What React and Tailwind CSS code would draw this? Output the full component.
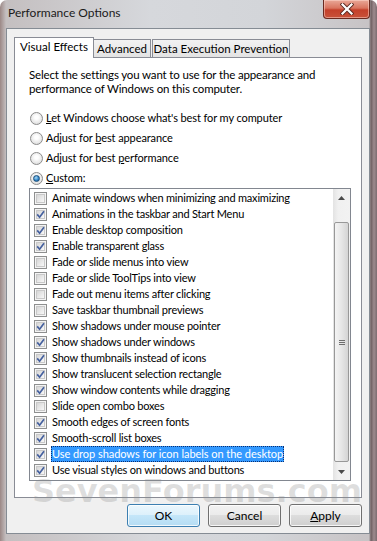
import React from "react";

const items = [
  ["Animate windows when minimizing and maximizing", false],
  ["Animations in the taskbar and Start Menu", true],
  ["Enable desktop composition", true],
  ["Enable transparent glass", true],
  ["Fade or slide menus into view", false],
  ["Fade or slide ToolTips into view", false],
  ["Fade out menu items after clicking", false],
  ["Save taskbar thumbnail previews", false],
  ["Show shadows under mouse pointer", true],
  ["Show shadows under windows", true],
  ["Show thumbnails instead of icons", true],
  ["Show translucent selection rectangle", true],
  ["Show window contents while dragging", true],
  ["Slide open combo boxes", false],
  ["Smooth edges of screen fonts", true],
  ["Smooth-scroll list boxes", true],
  ["Use drop shadows for icon labels on the desktop", true],
  ["Use visual styles on windows and buttons", true],
];

const CheckBox = ({ checked }) => (
  <span className="flex h-[13px] w-[13px] shrink-0 items-center justify-center border border-[#8e8f8f] bg-[#f4f4f4]">
    <span className="relative h-[9px] w-[9px] border border-[#c9c9c9] bg-[linear-gradient(135deg,#d6d6d6,#f8f8f8)]">
      {checked && (
        <svg viewBox="0 0 11 11" className="absolute -left-[2px] -top-[2px] h-[11px] w-[11px]">
          <path d="M2.2 5.4 L4.6 8.2 L9 2.2" fill="none" stroke="#45609e" strokeWidth="1.7" />
        </svg>
      )}
    </span>
  </span>
);

const Radio = ({ checked }) => (
  <span className="flex h-[13px] w-[13px] shrink-0 items-center justify-center rounded-full border border-[#8b8b8b] bg-[radial-gradient(circle_at_50%_40%,#ffffff_20%,#d2d2d2)]">
    {checked && (
      <span className="h-[7px] w-[7px] rounded-full border border-[#1d4f7a] bg-[radial-gradient(circle_at_40%_35%,#a8dcf8,#2b7fc4_60%,#164f82)]" />
    )}
  </span>
);

const Arrow = ({ up }) => (
  <div className="flex h-[17px] items-center justify-center">
    <svg viewBox="0 0 7 4" className="h-[4px] w-[7px]">
      <path d={up ? "M0 4 L3.5 0 L7 4 Z" : "M0 0 L3.5 4 L7 0 Z"} fill="#4b4b4b" />
    </svg>
  </div>
);

const Button = ({ children, main }) => (
  <button
    className={
      "flex h-[23px] w-[73px] items-center justify-center rounded-[3px] border text-[12px] text-black shadow-[inset_0_0_0_1px_rgba(255,255,255,0.8)] " +
      (main
        ? "border-[#3c7fb1] bg-[linear-gradient(#ecf7fd_0%,#dcf0fb_50%,#c4e6f9_50%,#b4dcf3_100%)]"
        : "border-[#707070] bg-[linear-gradient(#f2f2f2_0%,#ebebeb_50%,#dddddd_50%,#cfcfcf_100%)]")
    }
  >
    {children}
  </button>
);

export default function App() {
  return (
    <div className="relative flex h-[541px] w-[377px] flex-col overflow-hidden whitespace-nowrap rounded-t-[7px] bg-[linear-gradient(to_right,#9c8886_0px,#c4bfc0_6px,#d6d8dc_40%,#d3d5d9_70%,#c7c3c5_369px,#6f6062_371px,#9d8b8e_374px,#7c6c70_377px)] font-['Lato',sans-serif] text-[11.5px] text-black">
      {/* title bar */}
      <div className="flex h-[28px] items-start">
        <div className="pl-[8px] pt-[5px] text-[12px] leading-[16px] text-[#1b1b1b]">Performance Options</div>
        <div className="ml-auto mr-[7px] flex h-[19px] w-[47px] items-center justify-center rounded-b-[4px] border border-t-0 border-[#6a2a20] bg-[linear-gradient(#e9a898_0%,#d9745f_45%,#c4402a_55%,#c8523a_100%)] shadow-[inset_0_0_0_1px_rgba(255,220,210,0.5)]">
          <svg viewBox="0 0 14 12" className="h-[12px] w-[14px]">
            <path d="M2.5 1.5 L11.5 10.5 M11.5 1.5 L2.5 10.5" stroke="#5a2a22" strokeWidth="4" strokeLinecap="square" />
            <path d="M2.5 1.5 L11.5 10.5 M11.5 1.5 L2.5 10.5" stroke="#ffffff" strokeWidth="2.2" strokeLinecap="square" />
          </svg>
        </div>
      </div>

      {/* client area */}
      <div className="ml-[6px] flex h-[506px] w-[364px] flex-col border border-[#858c94] bg-[#f0f0f0]">
        <div className="relative z-10 -mb-[1px] ml-[7px] mt-[8px] flex h-[21px] items-end">
          <div className="flex h-[21px] w-[80px] items-start justify-center border border-b-0 border-[#898c95] bg-white pt-[1px] leading-[16px]">
            Visual Effects
          </div>
          <div className="mb-[1px] -ml-[1px] flex h-[18px] w-[58px] items-start justify-center border border-b-0 border-[#898c95] bg-[linear-gradient(#f2f2f2,#e3e3e3)] pt-[1px] leading-[16px]">
            Advanced
          </div>
          <div className="mb-[1px] ml-[1px] flex h-[18px] w-[138px] items-start justify-center border border-b-0 border-[#898c95] bg-[linear-gradient(#f2f2f2,#e3e3e3)] pt-[1px] leading-[16px]">
            Data Execution Prevention
          </div>
        </div>

        <div className="ml-[7px] flex h-[441px] w-[348px] flex-col border border-[#898c95] bg-white">
          <p className="pl-[14px] pt-[10px] leading-[14px] tracking-[-0.15px]">
            Select the settings you want to use for the appearance and
            <br />
            performance of Windows on this computer.
          </p>
          <div className="mt-[12px] flex flex-col pl-[15px] text-[11px] tracking-[-0.1px]">
            {[
              [<><u>L</u>et Windows choose what's best for my computer</>, false],
              [<>Adjust for <u>b</u>est appearance</>, false],
              [<>Adjust for best <u>p</u>erformance</>, false],
              [<><u>C</u>ustom:</>, true],
            ].map(([label, on], i) => (
              <div key={i} className="flex h-[20px] items-center gap-[3px]">
                <Radio checked={on} />
                <span className="leading-[16px]">{label}</span>
              </div>
            ))}
          </div>

          <div className="ml-[14px] flex h-[293px] w-[322px] border border-[#828790] bg-white">
            <div className="flex flex-1 flex-col pt-[1px] text-[11px] tracking-[-0.2px]">
              {items.map(([label, on], i) => (
                <div key={i} className="flex h-[16px] items-center pl-[4px]">
                  <CheckBox checked={on} />
                  {i === 16 ? (
                    <span className="ml-[4px] h-[16px] bg-[#3399ff] px-[1px] leading-[16px] tracking-[-0.05px] text-white outline-1 -outline-offset-1 outline-dotted outline-[#0b2f70]">
                      {label}
                    </span>
                  ) : (
                    <span className="ml-[5px] leading-[16px]">{label}</span>
                  )}
                </div>
              ))}
            </div>
            <div className="flex w-[17px] flex-col bg-[linear-gradient(to_right,#e3e3e3,#f0f0f0_30%,#f2f2f2)]">
              <Arrow up />
              <div className="h-[16px]" />
              <div className="mx-[1px] flex h-[240px] items-center justify-center rounded-[2px] border border-[#989898] bg-[linear-gradient(to_right,#f4f4f4,#e6e6e6_50%,#d4d4d4)]">
                <div className="flex flex-col gap-[1px]">
                  <span className="h-[1px] w-[6px] bg-[#6e6e6e]" />
                  <span className="h-[1px] w-[6px] bg-[#6e6e6e]" />
                  <span className="h-[1px] w-[6px] bg-[#6e6e6e]" />
                </div>
              </div>
              <div className="flex-1" />
              <Arrow />
            </div>
          </div>
        </div>

        <div className="mt-[6px] flex justify-end gap-[8px] pr-[7px]">
          <Button main>OK</Button>
          <Button>Cancel</Button>
          <Button>
            <span>
              <u>A</u>pply
            </span>
          </Button>
        </div>
      </div>

      {/* watermark */}
      <div className="pointer-events-none absolute left-[32px] top-[480px] font-['DejaVu_Sans',sans-serif] text-[32px] font-bold leading-[22px] text-[rgba(140,140,140,0.28)]">
        SevenForums.com
      </div>
    </div>
  );
}
